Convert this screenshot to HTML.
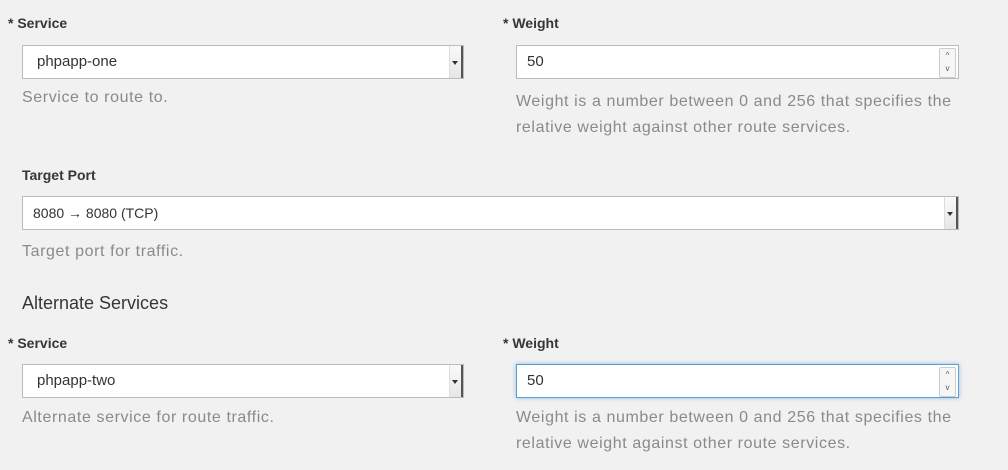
<!DOCTYPE html>
<html><head><style>
body{margin:0;width:1008px;height:470px;background:#f1f1f1;font-family:"Liberation Sans",sans-serif;position:relative;overflow:hidden;color:#363636}
.a{position:absolute}
.lbl{font-size:14px;font-weight:bold;color:#363636}
.help{font-size:16px;color:#8a8a8a;line-height:26px;letter-spacing:0.6px;white-space:nowrap}
.box{position:absolute;background:#fff;border:1px solid #bbb;box-sizing:border-box;height:34px;font-size:15px;line-height:32px;padding-left:14px;color:#333}
.sel::after{content:"";position:absolute;right:0;top:0;width:14px;height:32px;border-left:1px solid #ddd;background:linear-gradient(#fafafa,#e6e6e6);border-right:2px solid #555;box-sizing:border-box}
.sel::before{content:"";position:absolute;right:5px;top:15px;border:3px solid transparent;border-top:4px solid #333;z-index:2}
.spin{position:absolute;right:2px;top:2px;width:15px;height:28px;border:1px solid #ccc;background:#f6f6f6;font-size:8px;line-height:13px;text-align:center;color:#555;border-radius:2px}
.focus{border-color:#5a9fd4;box-shadow:0 0 4px rgba(80,150,220,.6)}
</style></head><body>
<div class="a lbl" style="left:8px;top:15px">* Service</div>
<div class="box sel" style="left:22px;top:45px;width:442px">phpapp-one</div>
<div class="a help" style="left:22px;top:85px">Service to route to.</div>

<div class="a lbl" style="left:503px;top:15px">* Weight</div>
<div class="box" style="left:516px;top:45px;width:443px;padding-left:10px">50<div class="spin">^<br>v</div></div>
<div class="a help" style="left:516px;top:89px">Weight is a number between 0 and 256 that specifies the<br>relative weight against other route services.</div>

<div class="a lbl" style="left:22px;top:167px">Target Port</div>
<div class="box sel" style="left:22px;top:196px;width:937px;padding-left:10px;font-size:14px">8080 &rarr; 8080 (TCP)</div>
<div class="a help" style="left:22px;top:239px">Target port for traffic.</div>

<div class="a" style="left:22px;top:293px;font-size:18px;color:#363636">Alternate Services</div>

<div class="a lbl" style="left:8px;top:335px">* Service</div>
<div class="box sel" style="left:22px;top:364px;width:442px">phpapp-two</div>
<div class="a help" style="left:22px;top:405px">Alternate service for route traffic.</div>

<div class="a lbl" style="left:503px;top:335px">* Weight</div>
<div class="box focus" style="left:516px;top:364px;width:443px;padding-left:10px">50<div class="spin">^<br>v</div></div>
<div class="a help" style="left:516px;top:405px">Weight is a number between 0 and 256 that specifies the<br>relative weight against other route services.</div>
</body></html>
